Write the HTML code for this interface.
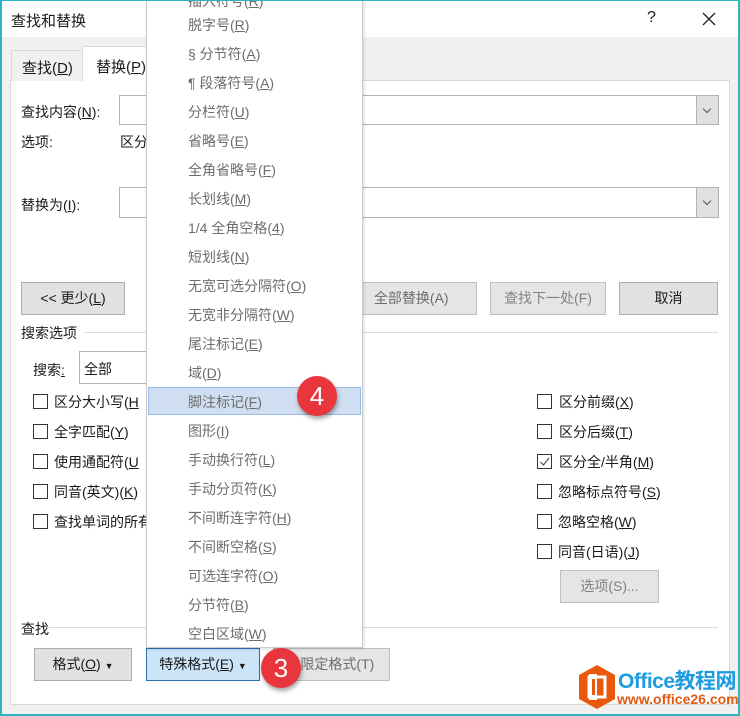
<!DOCTYPE html>
<html><head><meta charset="utf-8"><style>
*{margin:0;padding:0;box-sizing:border-box}
body{width:740px;height:716px;position:relative;overflow:hidden;background:#f0f0f0;font-family:"Liberation Sans","Noto Sans CJK SC",sans-serif;font-size:14px;color:#1a1a1a}
.a{position:absolute;white-space:nowrap}
.frame{position:absolute;left:0;top:0;width:740px;height:716px;border:2px solid #2bb5bf;border-top:1px solid #2bb5bf}
.btn{position:absolute;background:#e1e1e1;border:1px solid #adadad;text-align:center;line-height:30px}
.dis{color:#838383;border-color:#bfbfbf;background:#e5e5e5}
.inp{position:absolute;background:#fff;border:1px solid #b3b3b3}
.dd{position:absolute;right:0;top:0;bottom:0;width:22px;background:#e1e1e1;border-left:1px solid #b3b3b3}
.dd:after{content:"";position:absolute;left:7px;top:10px;width:5px;height:5px;border-right:1px solid #555;border-bottom:1px solid #555;transform:rotate(45deg)}
.cb{position:absolute;width:15px;height:15px;border:1px solid #333;background:#fff}
u{text-decoration:underline}
.menu{position:absolute;left:146px;top:-2px;width:217px;height:650px;background:#fff;border:1px solid #ccc;box-shadow:1px 1px 3px rgba(0,0,0,.15)}
.mi{position:absolute;left:41px;color:#6d6d6d;font-size:14px}
.circ{position:absolute;width:40px;height:40px;border-radius:50%;background:#e8363c;color:#fff;font-size:26px;text-align:center;line-height:40px;box-shadow:1px 3px 4px rgba(0,0,0,.35)}
</style></head><body>
<div class="a" style="left:0;top:0;width:740px;height:37px;background:#fff"></div>
<div class="a" style="left:11px;top:10px;font-size:15px">查找和替换</div>
<div class="a" style="left:647px;top:9px;font-size:16px">?</div>
<svg class="a" style="left:702px;top:12px" width="14" height="14"><path d="M1 1L13 13M13 1L1 13" stroke="#222" stroke-width="1.3"/></svg>
<!-- panel -->
<div class="a" style="left:10px;top:80px;width:720px;height:625px;background:#fff;border:1px solid #d9d9d9"></div>
<div class="a" style="left:11px;top:50px;width:72px;height:31px;background:#f0f0f0;border:1px solid #d9d9d9;border-bottom:none"></div>
<div class="a" style="left:22px;top:57px;font-size:15px">查找(<u>D</u>)</div>
<div class="a" style="left:82px;top:46px;width:70px;height:35px;background:#fff;border:1px solid #d9d9d9;border-bottom:none"></div>
<div class="a" style="left:96px;top:56px;font-size:15px">替换(<u>P</u>)</div>
<div class="a" style="left:21px;top:102px">查找内容(<u>N</u>):</div>
<div class="inp" style="left:119px;top:95px;width:600px;height:30px"><div class="dd"></div></div>
<div class="a" style="left:21px;top:132px">选项:</div>
<div class="a" style="left:120px;top:132px">区分</div>
<div class="a" style="left:21px;top:195px">替换为(<u>I</u>):</div>
<div class="inp" style="left:119px;top:187px;width:600px;height:31px"><div class="dd"></div></div>
<div class="btn" style="left:21px;top:282px;width:104px;height:33px">&lt;&lt; 更少(<u>L</u>)</div>
<div class="btn dis" style="left:330px;top:282px;width:147px;height:33px;color:#6d6d6d">&nbsp;&nbsp;&nbsp;&nbsp;全部替换(A)</div>
<div class="btn dis" style="left:490px;top:282px;width:116px;height:33px">查找下一处(F)</div>
<div class="btn" style="left:619px;top:282px;width:99px;height:33px">取消</div>
<div class="a" style="left:85px;top:332px;width:633px;height:1px;background:#dcdcdc"></div>
<div class="a" style="left:21px;top:323px">搜索选项</div>
<div class="a" style="left:33px;top:360px">搜索<u>:</u></div>
<div class="inp" style="left:79px;top:351px;width:90px;height:33px"></div>
<div class="a" style="left:84px;top:359px">全部</div>
<div class="cb" style="left:33px;top:394px"></div><div class="a" style="left:54px;top:392px">区分大小写(<u>H</u></div>
<div class="cb" style="left:33px;top:424px"></div><div class="a" style="left:54px;top:422px">全字匹配(<u>Y</u>)</div>
<div class="cb" style="left:33px;top:454px"></div><div class="a" style="left:54px;top:452px">使用通配符(<u>U</u></div>
<div class="cb" style="left:33px;top:484px"></div><div class="a" style="left:54px;top:482px">同音(英文)(<u>K</u>)</div>
<div class="cb" style="left:33px;top:514px"></div><div class="a" style="left:54px;top:512px">查找单词的所有</div>
<div class="cb" style="left:537px;top:394px"></div><div class="a" style="left:559px;top:392px">区分前缀(<u>X</u>)</div>
<div class="cb" style="left:537px;top:424px"></div><div class="a" style="left:559px;top:422px">区分后缀(<u>T</u>)</div>
<div class="cb" style="left:537px;top:454px"><svg width="13" height="13" style="position:absolute;left:0;top:0"><path d="M2.5 7L5.5 10L11 3" stroke="#555" fill="none" stroke-width="1.2"/></svg></div><div class="a" style="left:559px;top:452px">区分全/半角(<u>M</u>)</div>
<div class="cb" style="left:537px;top:484px"></div><div class="a" style="left:558px;top:482px">忽略标点符号(<u>S</u>)</div>
<div class="cb" style="left:537px;top:514px"></div><div class="a" style="left:558px;top:512px">忽略空格(<u>W</u>)</div>
<div class="cb" style="left:537px;top:544px"></div><div class="a" style="left:558px;top:542px">同音(日语)(<u>J</u>)</div>
<div class="btn dis" style="left:560px;top:570px;width:99px;height:33px">选项(S)...</div>
<div class="a" style="left:40px;top:627px;width:678px;height:1px;background:#dcdcdc"></div>
<div class="a" style="left:21px;top:619px">查找</div>
<div class="btn" style="left:34px;top:648px;width:98px;height:33px">格式(<u>O</u>) <span style="font-size:9px">▼</span></div>
<div class="btn" style="left:146px;top:648px;width:114px;height:33px;background:#cce4f7;border-color:#2c6fb3">特殊格式(<u>E</u>) <span style="font-size:9px">▼</span></div>
<div class="btn dis" style="left:273px;top:648px;width:117px;height:33px;color:#6d6d6d">&nbsp;&nbsp;&nbsp;限定格式(T)</div>
<!-- menu -->
<div class="menu">
<div class="mi" style="top:-8px">插入符号(<u>R</u>)</div>
<div class="mi" style="top:16px">脱字号(<u>R</u>)</div>
<div class="mi" style="top:45px">§ 分节符(<u>A</u>)</div>
<div class="mi" style="top:74px">¶ 段落符号(<u>A</u>)</div>
<div class="mi" style="top:103px">分栏符(<u>U</u>)</div>
<div class="mi" style="top:132px">省略号(<u>E</u>)</div>
<div class="mi" style="top:161px">全角省略号(<u>F</u>)</div>
<div class="mi" style="top:190px">长划线(<u>M</u>)</div>
<div class="mi" style="top:219px">1/4 全角空格(<u>4</u>)</div>
<div class="mi" style="top:248px">短划线(<u>N</u>)</div>
<div class="mi" style="top:277px">无宽可选分隔符(<u>O</u>)</div>
<div class="mi" style="top:306px">无宽非分隔符(<u>W</u>)</div>
<div class="mi" style="top:335px">尾注标记(<u>E</u>)</div>
<div class="mi" style="top:364px">域(<u>D</u>)</div>
<div style="position:absolute;left:1px;top:388px;width:213px;height:28px;background:#cfdef0;border:1px solid #99bbe4"></div>
<div class="mi" style="top:393px">脚注标记(<u>F</u>)</div>
<div class="mi" style="top:422px">图形(<u>I</u>)</div>
<div class="mi" style="top:451px">手动换行符(<u>L</u>)</div>
<div class="mi" style="top:480px">手动分页符(<u>K</u>)</div>
<div class="mi" style="top:509px">不间断连字符(<u>H</u>)</div>
<div class="mi" style="top:538px">不间断空格(<u>S</u>)</div>
<div class="mi" style="top:567px">可选连字符(<u>O</u>)</div>
<div class="mi" style="top:596px">分节符(<u>B</u>)</div>
<div class="mi" style="top:625px">空白区域(<u>W</u>)</div>
</div>
<div class="circ" style="left:297px;top:376px">4</div>
<div class="circ" style="left:261px;top:648px">3</div>
<!-- logo -->
<svg class="a" style="left:577px;top:664px" width="40" height="46"><polygon points="20,1 38,11 38,35 20,45 2,35 2,11" fill="#e8590c"/><rect x="12" y="13" width="16" height="20" fill="none" stroke="#fff" stroke-width="3"/><rect x="12" y="10" width="8" height="26" fill="#fff"/><rect x="15" y="15" width="3" height="16" fill="#e8590c"/></svg>
<div class="a" style="left:618px;top:665px;font-size:21px;font-weight:bold;color:#1f9be0;letter-spacing:-0.5px">Office教程网</div>
<div class="a" style="left:617px;top:691px;font-size:14px;font-weight:bold;color:#e05a12">www.office26.com</div>
<div class="frame"></div>
</body></html>
